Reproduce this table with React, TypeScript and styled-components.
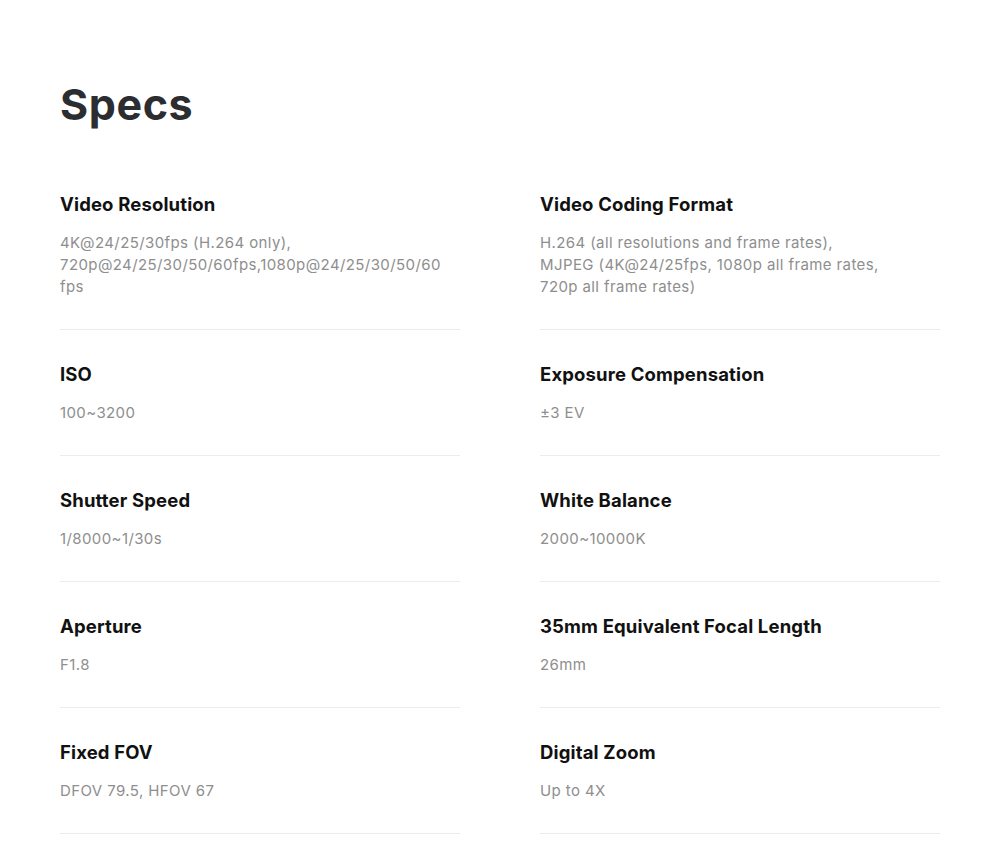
import React from "react";
import styled, { createGlobalStyle } from "styled-components";

const GlobalStyle = createGlobalStyle`
  body {
    margin: 0;
    background: #ffffff;
    font-family: "Inter", "Lato", sans-serif;
  }
`;

const Page = styled.section`
  width: 880px;
  margin: 0 auto;
  padding-top: 76px;
`;

const Heading = styled.h2`
  margin: 0 0 28px;
  font-size: 43px;
  line-height: 56px;
  font-weight: 700;
  color: #2c2d30;
  letter-spacing: 0.6px;
`;

const Grid = styled.div`
  display: grid;
  grid-template-columns: 400px 400px;
  column-gap: 80px;
`;

const Item = styled.div`
  padding: 30px 0 31px;
  border-bottom: 1px solid #ececec;
`;

const Label = styled.h3`
  margin: 0 0 14px;
  font-size: 18.5px;
  line-height: 28px;
  font-weight: 700;
  color: #111111;
  letter-spacing: 0.15px;
`;

const Value = styled.p`
  margin: 0;
  font-size: 15px;
  line-height: 22px;
  color: #8e8e8e;
  letter-spacing: 0.4px;
`;

const specs: { label: string; value: string[] }[] = [
  {
    label: "Video Resolution",
    value: [
      "4K@24/25/30fps (H.264 only),",
      "720p@24/25/30/50/60fps,1080p@24/25/30/50/60",
      "fps",
    ],
  },
  {
    label: "Video Coding Format",
    value: [
      "H.264 (all resolutions and frame rates),",
      "MJPEG (4K@24/25fps, 1080p all frame rates,",
      "720p all frame rates)",
    ],
  },
  { label: "ISO", value: ["100~3200"] },
  { label: "Exposure Compensation", value: ["±3 EV"] },
  { label: "Shutter Speed", value: ["1/8000~1/30s"] },
  { label: "White Balance", value: ["2000~10000K"] },
  { label: "Aperture", value: ["F1.8"] },
  { label: "35mm Equivalent Focal Length", value: ["26mm"] },
  { label: "Fixed FOV", value: ["DFOV 79.5, HFOV 67"] },
  { label: "Digital Zoom", value: ["Up to 4X"] },
];

export default function App() {
  return (
    <>
      <GlobalStyle />
      <Page>
        <Heading>Specs</Heading>
        <Grid>
          {specs.map((s) => (
            <Item key={s.label}>
              <Label>{s.label}</Label>
              <Value>
                {s.value.map((line, i) => (
                  <React.Fragment key={i}>
                    {i > 0 && <br />}
                    {line}
                  </React.Fragment>
                ))}
              </Value>
            </Item>
          ))}
        </Grid>
      </Page>
    </>
  );
}
